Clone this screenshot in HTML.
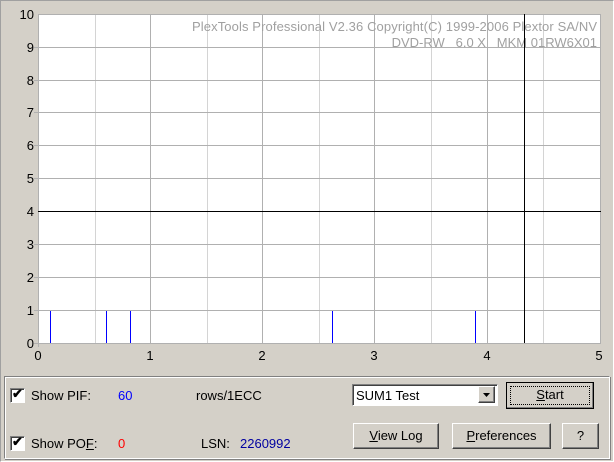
<!DOCTYPE html>
<html><head><style>
body{margin:0;width:614px;height:462px;background:#d4d0c8;font-family:"Liberation Sans",sans-serif;font-size:13px;position:relative;overflow:hidden}
.abs{position:absolute}
.btn{position:absolute;background:#d4d0c8;border-top:1px solid #fff;border-left:1px solid #fff;border-right:1px solid #404040;border-bottom:1px solid #404040;box-shadow:inset -1px -1px 0 #808080;text-align:center;font-size:13px;color:#000}
.cb{position:absolute;width:13px;height:13px;background:#fff;border-top:1px solid #808080;border-left:1px solid #808080;border-right:1px solid #fff;border-bottom:1px solid #fff;box-shadow:inset 1px 1px 0 #404040}
</style></head><body>
<div class="abs" style="left:0;top:0;width:612px;height:460px;border-top:1px solid #a0a0a0;border-left:1px solid #a0a0a0;border-right:1px solid #fff;border-bottom:1px solid #fff"></div>
<svg class="abs" style="left:0;top:0" width="614" height="370">
<rect x="38" y="14" width="562" height="329" fill="#fff"/>
<g stroke="#d4d4d4" stroke-width="1">
<line x1="95.5" y1="14" x2="95.5" y2="343"/><line x1="207.5" y1="14" x2="207.5" y2="343"/><line x1="319.5" y1="14" x2="319.5" y2="343"/><line x1="431.5" y1="14" x2="431.5" y2="343"/><line x1="543.5" y1="14" x2="543.5" y2="343"/>
</g>
<g stroke="#b0b0b0" stroke-width="1">
<line x1="150.5" y1="14" x2="150.5" y2="343"/><line x1="262.5" y1="14" x2="262.5" y2="343"/><line x1="374.5" y1="14" x2="374.5" y2="343"/><line x1="487.5" y1="14" x2="487.5" y2="343"/>
<line x1="38" y1="14.5" x2="601" y2="14.5"/><line x1="34" y1="47.5" x2="601" y2="47.5"/><line x1="34" y1="80.5" x2="601" y2="80.5"/><line x1="34" y1="112.5" x2="601" y2="112.5"/><line x1="34" y1="145.5" x2="601" y2="145.5"/><line x1="34" y1="178.5" x2="601" y2="178.5"/><line x1="34" y1="244.5" x2="601" y2="244.5"/><line x1="34" y1="277.5" x2="601" y2="277.5"/><line x1="34" y1="310.5" x2="601" y2="310.5"/>
<line x1="38.5" y1="14" x2="38.5" y2="347"/><line x1="600.5" y1="14" x2="600.5" y2="344"/><line x1="34" y1="343.5" x2="601" y2="343.5"/>
</g>
<text x="597" y="31" text-anchor="end" font-family="Liberation Sans" font-size="13" fill="#a0a0a0" textLength="405">PlexTools Professional V2.36 Copyright(C) 1999-2006 Plextor SA/NV</text>
<text x="597" y="47" text-anchor="end" font-family="Liberation Sans" font-size="13" fill="#a0a0a0" style="white-space:pre" xml:space="preserve">DVD-RW   6.0 X   MKM 01RW6X01</text>
<line x1="38" y1="211.5" x2="601" y2="211.5" stroke="#000"/>
<line x1="524.5" y1="14" x2="524.5" y2="343" stroke="#000"/>
<g stroke="#0000ff"><line x1="50.5" y1="311" x2="50.5" y2="343"/><line x1="106.5" y1="311" x2="106.5" y2="343"/><line x1="130.5" y1="311" x2="130.5" y2="343"/><line x1="332.5" y1="311" x2="332.5" y2="343"/><line x1="475.5" y1="311" x2="475.5" y2="343"/></g>
<g font-family="Liberation Sans" font-size="13" fill="#000" text-anchor="end">
<text x="34" y="19">10</text><text x="34" y="52">9</text><text x="34" y="85">8</text><text x="34" y="117">7</text><text x="34" y="150">6</text><text x="34" y="183">5</text><text x="34" y="216">4</text><text x="34" y="249">3</text><text x="34" y="282">2</text><text x="34" y="315">1</text><text x="34" y="348">0</text>
</g>
<g font-family="Liberation Sans" font-size="13" fill="#000" text-anchor="middle">
<text x="38" y="360">0</text><text x="150" y="360">1</text><text x="262" y="360">2</text><text x="374" y="360">3</text><text x="487" y="360">4</text><text x="599" y="360">5</text>
</g>
</svg>
<div class="abs" style="left:4px;top:376px;width:604px;height:81px;border-top:1px solid #808080;border-left:1px solid #808080;border-right:1px solid #fff;border-bottom:1px solid #fff;box-shadow:inset 1px 1px 0 #fff, 1px 1px 0 #808080"></div>
<div class="cb" style="left:10px;top:388px"></div><div class="abs" style="left:12px;top:386px;font-size:13px;font-weight:bold">✔</div>
<div class="cb" style="left:10px;top:436px"></div><div class="abs" style="left:12px;top:434px;font-size:13px;font-weight:bold">✔</div>
<div class="abs" style="left:31px;top:388px">Show PIF:</div>
<div class="abs" style="left:31px;top:436px">Show PO<u>F</u>:</div>
<div class="abs" style="left:118px;top:388px;color:#0000ff">60</div>
<div class="abs" style="left:118px;top:436px;color:#ff0000">0</div>
<div class="abs" style="left:196px;top:388px">rows/1ECC</div>
<div class="abs" style="left:201px;top:436px">LSN:</div>
<div class="abs" style="left:240px;top:436px;color:#0000a0">2260992</div>
<div class="abs" style="left:352px;top:384px;width:144px;height:20px;background:#fff;border-top:1px solid #808080;border-left:1px solid #808080;border-right:1px solid #fff;border-bottom:1px solid #fff;box-shadow:inset 1px 1px 0 #404040"></div>
<div class="abs" style="left:356px;top:388px;font-size:13px">SUM1 Test</div>
<div class="btn" style="left:478px;top:386px;width:15px;height:15px"><svg width="15" height="15"><path d="M4 6h7l-3.5 4z" fill="#000"/></svg></div>
<div class="btn" style="left:506px;top:382px;width:86px;height:25px;border:1px solid #000;line-height:24px"><div style="position:absolute;left:3px;top:3px;right:3px;bottom:3px;border:1px dotted #000"></div><u>S</u>tart</div>
<div class="btn" style="left:353px;top:423px;width:84px;height:24px;line-height:23px"><u>V</u>iew Log</div>
<div class="btn" style="left:452px;top:423px;width:97px;height:24px;line-height:23px"><u>P</u>references</div>
<div class="btn" style="left:562px;top:423px;width:35px;height:24px;line-height:23px">?</div>
</body></html>
